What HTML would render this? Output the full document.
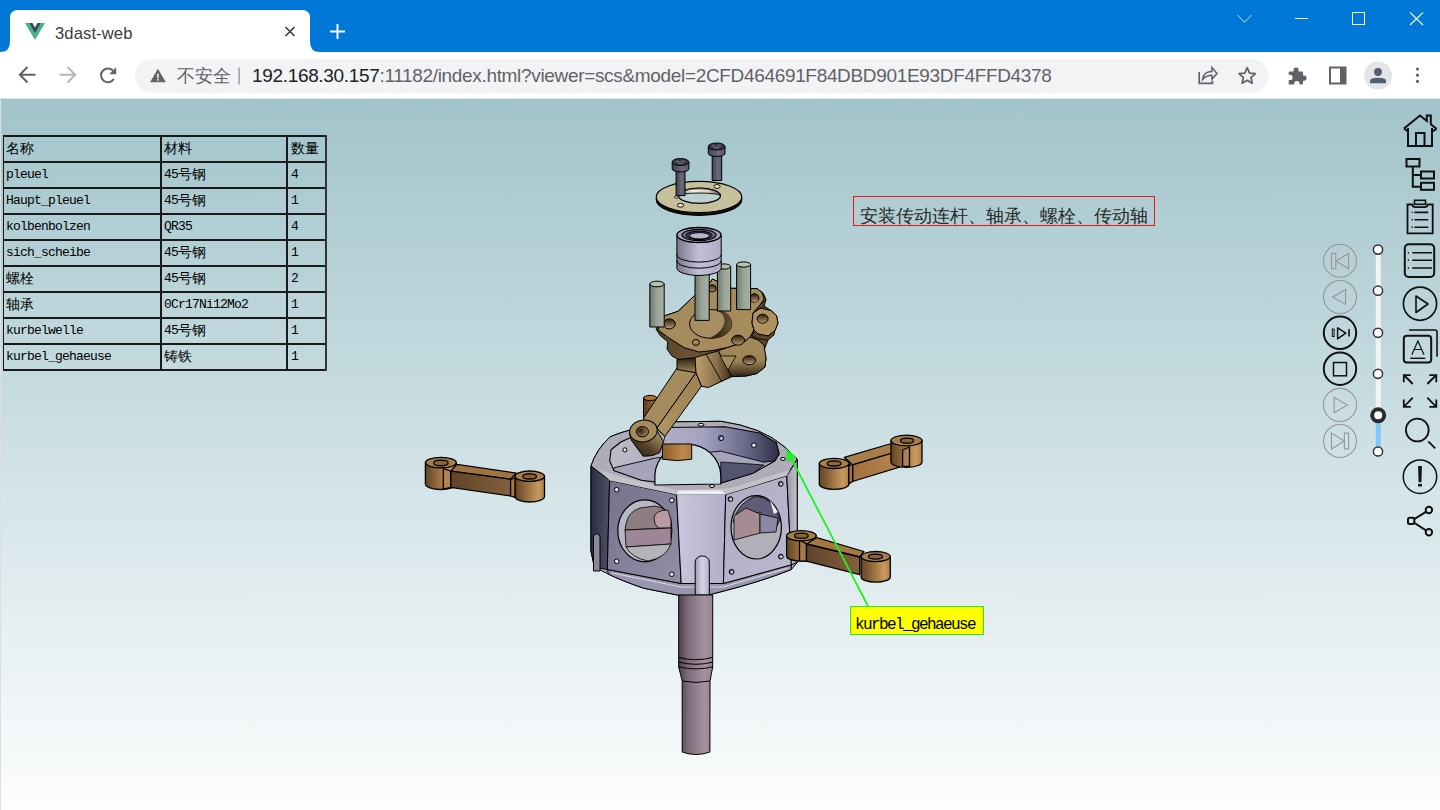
<!DOCTYPE html>
<html><head><meta charset="utf-8">
<style>
*{margin:0;padding:0;box-sizing:border-box}
html,body{width:1440px;height:810px;overflow:hidden;font-family:"Liberation Sans",sans-serif;background:#fff;position:relative}
.abs{position:absolute}
#titlebar{left:0;top:0;width:1440px;height:52px;background:#0078d7}
#toolbar{left:0;top:52px;width:1440px;height:46px;background:#fff}
#omni{left:135px;top:59px;width:1134px;height:34px;border-radius:17px;background:#f1f3f4}
#view{left:1px;top:99px;width:1439px;height:711px;background:linear-gradient(to bottom,#a1c4ca 0px,#c5dbe0 281px,#e8f0f2 541px,#fcfdfe 711px)}
.tb{position:absolute;font-family:"Liberation Mono",monospace;font-size:13px;letter-spacing:-0.8px;color:#000;white-space:nowrap}
.hl{position:absolute;background:#1a1a1a;height:2px}
.vl{position:absolute;background:#1a1a1a;width:2px}
.cj{font-size:13.6px;letter-spacing:-0.2px;position:relative;top:0.5px}
</style></head><body>
<div id="titlebar" class="abs"></div>
<!-- tab -->
<svg class="abs" style="left:0;top:0" width="360" height="53">
<path d="M0 52 Q10 52 10 42 L10 18 Q10 10 18 10 L302 10 Q310 10 310 18 L310 42 Q310 52 320 52 Z" fill="#fff"/>
<!-- vue logo -->
<path d="M25 23 L29 23 L35 33.5 L41 23 L45 23 L35 40 Z" fill="#41b883"/>
<path d="M29 23 L32.5 23 L35 27.5 L37.5 23 L41 23 L35 33.5 Z" fill="#35495e"/>
<path d="M285.5 27 L294.5 36 M294.5 27 L285.5 36" stroke="#3c3c3c" stroke-width="1.6"/>
<path d="M330 31.5 L345 31.5 M337.5 24 L337.5 39" stroke="#fff" stroke-width="2"/>
</svg>
<div class="abs" style="left:55px;top:23.5px;font-size:16.6px;letter-spacing:0.1px;color:#3c3c3c">3dast-web</div>
<!-- window controls -->
<svg class="abs" style="left:1220px;top:0" width="220" height="40">
<path d="M17.5 15 L24.5 22.3 L31.5 15" stroke="rgba(255,255,255,0.75)" stroke-width="1" fill="none"/>
<path d="M75 18.5 L88 18.5" stroke="#fff" stroke-width="1"/>
<rect x="132.5" y="12.5" width="12" height="12" stroke="#fff" stroke-width="1" fill="none"/>
<path d="M190 12.3 L203 25 M203 12.3 L190 25" stroke="#fff" stroke-width="1.1"/>
</svg>
<div id="toolbar" class="abs"></div>
<div id="omni" class="abs"></div>
<!-- nav icons -->
<svg class="abs" style="left:0;top:52px" width="140" height="46">
<path d="M35.5 22.7 L20.5 22.7 M27.5 15 L19.8 22.7 L27.5 30.5" stroke="#5f6368" stroke-width="2" fill="none"/>
<path d="M59.5 22.7 L74.5 22.7 M67.5 15 L75.2 22.7 L67.5 30.5" stroke="#b4b6b9" stroke-width="2" fill="none"/>
<path d="M113.8 27 A6.9 6.9 0 1 1 113.3 19" stroke="#5f6368" stroke-width="2" fill="none"/>
<path d="M116.2 15.3 L116.2 22.3 L109.2 22.3 Z" fill="#5f6368"/>
</svg>
<svg class="abs" style="left:140px;top:55px" width="120" height="40">
<path d="M17.9 14.8 L10.9 26.8 L24.9 26.8 Z" fill="#5f6368" stroke="#5f6368" stroke-width="1.1" stroke-linejoin="round"/>
<rect x="17.1" y="18.6" width="1.6" height="4.6" fill="#f1f3f4"/>
<rect x="17.1" y="24" width="1.6" height="1.6" fill="#f1f3f4"/>
<rect x="98.5" y="12.5" width="1.2" height="17" fill="#888"/>
</svg>
<div class="abs" style="left:177px;top:64px;font-size:18px;color:#5f6368">不安全</div>
<div class="abs" style="left:252px;top:65px;font-size:19px;letter-spacing:-0.33px;color:#202124;white-space:nowrap" id="url">192.168.30.157<span style="color:#5f6368">:11182/index.html?viewer=scs&amp;model=2CFD464691F84DBD901E93DF4FFD4378</span></div>
<!-- right toolbar icons -->
<svg class="abs" style="left:1180px;top:52px" width="260" height="46">
<!-- share -->
<path d="M19.2 19.9 L19.2 31.3 L32.5 31.3 L32.5 28.8" stroke="#5f6368" stroke-width="1.7" fill="none"/>
<path d="M22.6 27.6 Q23.5 19.6 31.9 19.6 L31.9 15.6 L37 21.4 L31.9 27.3 L31.9 23.3 Q26 23.3 22.6 27.6 Z" stroke="#5f6368" stroke-width="1.5" fill="none" stroke-linejoin="miter"/>
<!-- star -->
<path d="M67.20 15.70 L69.55 21.06 L75.38 21.64 L71.00 25.54 L72.25 31.26 L67.20 28.30 L62.15 31.26 L63.40 25.54 L59.02 21.64 L64.85 21.06 Z" stroke="#5f6368" stroke-width="1.7" fill="none" stroke-linejoin="round"/>
<!-- puzzle -->
<path d="M109.5 19.5 L113.5 19.5 L113.5 18 A2.6 2.6 0 0 1 118.7 18 L118.7 19.5 L122 19.5 Q123 19.5 123 20.5 L123 23.5 L124 23.5 A2.6 2.6 0 0 1 124 28.7 L123 28.7 L123 31.5 Q123 32.5 122 32.5 L119.5 32.5 L119.5 31.5 A2.6 2.6 0 0 0 114.3 31.5 L114.3 32.5 L109.5 32.5 Q108.7 32.5 108.7 31.5 L108.7 28 L110 28 A2.6 2.6 0 0 0 110 22.8 L108.7 22.8 L108.7 20.5 Q108.7 19.5 109.5 19.5 Z" fill="#5f6368"/>
<!-- sidebar -->
<rect x="150" y="15.5" width="15.5" height="16" fill="none" stroke="#5f6368" stroke-width="2"/>
<rect x="160" y="15.5" width="5.5" height="16" fill="#5f6368"/>
<!-- avatar -->
<circle cx="198" cy="23.6" r="14" fill="#e3e5e8"/>
<circle cx="198" cy="20" r="3.9" fill="#525e6e"/>
<path d="M190 31.3 L190 29 Q190 25.8 198 25.8 Q206 25.8 206 29 L206 31.3 Z" fill="#525e6e"/>
<!-- kebab -->
<circle cx="237.5" cy="17" r="1.6" fill="#5f6368"/>
<circle cx="237.5" cy="23.2" r="1.6" fill="#5f6368"/>
<circle cx="237.5" cy="29.4" r="1.6" fill="#5f6368"/>
</svg>
<div id="view" class="abs"></div>
<div class="abs" style="left:0;top:98px;width:1440px;height:1px;background:#e2e0e4"></div><div class="abs" style="left:0;top:98px;width:1px;height:712px;background:#dcdee0"></div>

<!-- table -->
<div class="abs" style="left:0;top:0;width:340px;height:380px">
<div class="hl" style="left:3px;top:135px;width:324px"></div>
<div class="hl" style="left:3px;top:161px;width:324px"></div>
<div class="hl" style="left:3px;top:187px;width:324px"></div>
<div class="hl" style="left:3px;top:213px;width:324px"></div>
<div class="hl" style="left:3px;top:239px;width:324px"></div>
<div class="hl" style="left:3px;top:265px;width:324px"></div>
<div class="hl" style="left:3px;top:291px;width:324px"></div>
<div class="hl" style="left:3px;top:317px;width:324px"></div>
<div class="hl" style="left:3px;top:343px;width:324px"></div>
<div class="hl" style="left:3px;top:369px;width:324px"></div>
<div class="vl" style="left:3px;top:135px;height:236px;width:1px"></div>
<div class="vl" style="left:160px;top:135px;height:236px"></div>
<div class="vl" style="left:286px;top:135px;height:236px"></div>
<div class="vl" style="left:325px;top:135px;height:236px;background:#333"></div>
</div>

<!-- MODEL -->
<svg class="abs" style="left:0;top:0" width="1440" height="810" viewBox="0 0 1440 810">
<defs>
<linearGradient id="cylTan" x1="0" x2="1" y1="0" y2="0">
<stop offset="0" stop-color="#604426"/><stop offset="0.45" stop-color="#9c7242"/><stop offset="0.8" stop-color="#c89a5e"/><stop offset="1" stop-color="#aa7e4c"/>
</linearGradient>
<linearGradient id="rodFront" x1="0" x2="1" y1="0" y2="0">
<stop offset="0" stop-color="#60432a"/><stop offset="1" stop-color="#84603a"/>
</linearGradient>
<linearGradient id="rodFrontR" x1="0" x2="1" y1="0" y2="0">
<stop offset="0" stop-color="#a07040"/><stop offset="1" stop-color="#b88650"/>
</linearGradient>
<linearGradient id="shaftG" x1="0" x2="1" y1="0" y2="0">
<stop offset="0" stop-color="#4e404c"/><stop offset="0.3" stop-color="#806e7e"/><stop offset="0.75" stop-color="#a4929e"/><stop offset="1" stop-color="#96848f"/>
</linearGradient>
<linearGradient id="pinG" x1="0" x2="1" y1="0" y2="0">
<stop offset="0" stop-color="#6e786c"/><stop offset="0.5" stop-color="#9aa496"/><stop offset="1" stop-color="#a8b0a2"/>
</linearGradient>
<linearGradient id="screwG" x1="0" x2="1" y1="0" y2="0">
<stop offset="0" stop-color="#404050"/><stop offset="0.6" stop-color="#6a6a7a"/><stop offset="1" stop-color="#5a5a68"/>
</linearGradient>
<linearGradient id="bearG" x1="0" x2="1" y1="0" y2="0">
<stop offset="0" stop-color="#7a7690"/><stop offset="0.5" stop-color="#c4c0d8"/><stop offset="1" stop-color="#b0acc4"/>
</linearGradient>
<linearGradient id="housL" x1="0" x2="1" y1="0" y2="0">
<stop offset="0" stop-color="#2c2c40"/><stop offset="1" stop-color="#50506a"/>
</linearGradient>
<linearGradient id="panelL" x1="0" x2="1" y1="0" y2="1">
<stop offset="0" stop-color="#74728c"/><stop offset="1" stop-color="#9290a6"/>
</linearGradient>
<linearGradient id="innerWall" x1="0" x2="1" y1="0" y2="0">
<stop offset="0" stop-color="#bcbcc2"/><stop offset="0.25" stop-color="#b4b2c6"/><stop offset="0.55" stop-color="#a4a2c0"/><stop offset="0.8" stop-color="#6c6a8c"/><stop offset="1" stop-color="#2e2e46"/>
</linearGradient>
<linearGradient id="centerF" x1="0" x2="1" y1="0" y2="0">
<stop offset="0" stop-color="#c8c6dc"/><stop offset="1" stop-color="#b2b0c8"/>
</linearGradient>
<linearGradient id="panelR" x1="0" x2="1" y1="0" y2="1">
<stop offset="0" stop-color="#aeacc2"/><stop offset="1" stop-color="#bcbad0"/>
</linearGradient>
<linearGradient id="sideR" x1="0" x2="1" y1="0" y2="0">
<stop offset="0" stop-color="#9896a8"/><stop offset="1" stop-color="#c4c2cc"/>
</linearGradient>
<linearGradient id="innerTan" x1="0" x2="1" y1="0" y2="0">
<stop offset="0" stop-color="#8a5a2c"/><stop offset="0.7" stop-color="#c08a4c"/><stop offset="1" stop-color="#b07a40"/>
</linearGradient>
<linearGradient id="pinW" x1="0" x2="1" y1="0" y2="0">
<stop offset="0" stop-color="#9c9cb4"/><stop offset="0.5" stop-color="#d4d4e4"/><stop offset="1" stop-color="#b4b4c8"/>
</linearGradient>
<linearGradient id="flDark" x1="0" x2="1" y1="0" y2="1">
<stop offset="0" stop-color="#3e2e1a"/><stop offset="0.5" stop-color="#6a5234"/><stop offset="1" stop-color="#4a3820"/>
</linearGradient>
<linearGradient id="rodSide" x1="0" x2="1" y1="0" y2="0">
<stop offset="0" stop-color="#b09462"/><stop offset="1" stop-color="#9c8254"/>
</linearGradient>
<linearGradient id="smallEnd" x1="0" x2="1" y1="1" y2="0">
<stop offset="0" stop-color="#1e180c"/><stop offset="0.45" stop-color="#54422a"/><stop offset="0.8" stop-color="#98805a"/><stop offset="1" stop-color="#a68c5c"/>
</linearGradient>
<radialGradient id="holeG" cx="0.35" cy="0.4" r="0.7">
<stop offset="0" stop-color="#2a2010"/><stop offset="1" stop-color="#a88c5c"/>
</radialGradient>
<linearGradient id="neckG" x1="0" x2="0" y1="0" y2="1">
<stop offset="0" stop-color="#2a2010"/><stop offset="1" stop-color="#a08658"/>
</linearGradient>
<linearGradient id="neckSide" x1="0" x2="1" y1="0" y2="0">
<stop offset="0" stop-color="#c0a070"/><stop offset="0.6" stop-color="#8a7048"/><stop offset="1" stop-color="#3a2a18"/>
</linearGradient>
<linearGradient id="lobeG" x1="0" x2="0" y1="0" y2="1">
<stop offset="0" stop-color="#a48a5a"/><stop offset="0.6" stop-color="#9e8456"/><stop offset="0.8" stop-color="#6a5434"/><stop offset="1" stop-color="#2e2214"/>
</linearGradient>
<linearGradient id="crescG" x1="0" x2="1" y1="0" y2="0">
<stop offset="0" stop-color="#1e160c"/><stop offset="1" stop-color="#6a5434"/>
</linearGradient>
<linearGradient id="holeT" x1="0" x2="0" y1="0" y2="1">
<stop offset="0" stop-color="#2a1e10"/><stop offset="0.7" stop-color="#907650"/><stop offset="1" stop-color="#ac9262"/>
</linearGradient>
<linearGradient id="washIn" x1="0" x2="1" y1="0" y2="0">
<stop offset="0" stop-color="#8a8670"/><stop offset="0.35" stop-color="#f4f0dc"/><stop offset="0.7" stop-color="#d8d4bc"/><stop offset="1" stop-color="#5a5848"/>
</linearGradient>
<linearGradient id="behindCyl" x1="0" x2="1" y1="0" y2="0">
<stop offset="0" stop-color="#5a3a1a"/><stop offset="1" stop-color="#a87040"/>
</linearGradient>
<radialGradient id="boltD" cx="0.65" cy="0.6" r="0.6">
<stop offset="0" stop-color="#f0f0f8"/><stop offset="1" stop-color="#4a4a60"/>
</radialGradient>
</defs>
<g stroke="#000" stroke-width="1" stroke-linejoin="round">

<!-- ===== left pleuel ===== -->
<g id="pl-left" stroke-width="1.3">
<path d="M425.4 462.6 L425.4 484 A15.4 5.5 0 0 0 456.3 484 L456.3 462.6 Z" fill="url(#cylTan)"/>
<ellipse cx="440.9" cy="462.6" rx="15.4" ry="5.3" fill="#a87e48"/>
<ellipse cx="440.9" cy="463" rx="7.2" ry="2.8" fill="#8a6236"/>
<path d="M456.9 464.4 L516.2 473.1 L510.6 479.3 L450.7 471.2 Z" fill="#a07440"/>
<path d="M450.7 471.2 L510.6 479.3 L510.6 495.9 L450.7 487.3 Z" fill="url(#rodFront)"/>
<path d="M443.3 468.5 L450.7 471.2 L450.7 487.3 L443.3 489.2 Z" fill="#b4824c"/>
<path d="M514.9 476.2 L514.9 496.5 A14.8 5.5 0 0 0 544.5 496.5 L544.5 476.2 Z" fill="url(#cylTan)"/>
<path d="M510.6 479.3 L515 478 L515 497.5 L510.6 495.9 Z" fill="#a87848"/>
<ellipse cx="529.7" cy="476.2" rx="14.8" ry="5.2" fill="#a87e48"/>
<ellipse cx="529.7" cy="476.4" rx="6.8" ry="2.6" fill="#8a6236"/>
</g>

<!-- ===== right top pleuel ===== -->
<g id="pl-rt" stroke-width="1.3">
<path d="M844.3 457.4 L889.6 444 L902.6 450 L852.6 464.8 Z" fill="#a87e48"/>
<path d="M852.6 464.8 L902.6 450 L902.6 466.2 L852.6 481.5 Z" fill="url(#rodFrontR)"/>
<path d="M891 440.5 L891 462 A15.5 5.3 0 0 0 922 462 L922 440.5 Z" fill="url(#cylTan)"/>
<path d="M902.6 450 L909.5 447 L909.5 466.5 L902.6 466.2 Z" fill="#b08050"/>
<ellipse cx="906.5" cy="440.5" rx="15.5" ry="5.3" fill="#a87e48"/>
<ellipse cx="907" cy="440.7" rx="6.5" ry="2.5" fill="#8c6436"/>
<path d="M819.3 463.4 L819.3 484.3 A14.8 5.1 0 0 0 848.9 484.3 L848.9 463.4 Z" fill="url(#cylTan)"/>
<path d="M848.9 465 L852.6 464.8 L852.6 481.5 L848.9 484 Z" fill="#a87a48"/>
<ellipse cx="834.1" cy="463.4" rx="14.8" ry="5.1" fill="#a87e48"/>
<ellipse cx="834.1" cy="463.4" rx="6.9" ry="2.6" fill="#8c6436"/>
</g>

<!-- small tan cylinder behind rod -->
<path d="M643.5 398 L657 398 L657 418 L648.5 421 L643.5 418 Z" fill="url(#behindCyl)"/><ellipse cx="650.2" cy="398" rx="6.7" ry="2.6" fill="#a87238"/>

<!-- ===== housing ===== -->
<g id="housing">
<!-- outer silhouette -->
<path d="M591 466 Q596 450 609.7 437.2 Q627 428.5 673.6 421.9 L720.8 421.3 Q762 427 784.7 447 L797.2 459 L797.2 562.4 L791.4 569.5 Q760 582 720 592 L707 595.3 L678.8 595.3 L643.6 588.2 Q620 580 608.5 574.2 L594.4 567.1 L590.9 550.7 Z" fill="#a8a6ba"/>
<!-- left dark face -->
<path d="M591 466 L609.6 480.4 L607.3 569.5 L594.4 567.1 L590.9 550.7 Z" fill="url(#housL)"/>
<!-- bottom bevel band -->
<path d="M607.3 569.5 L681.2 583.5 L723.4 583.5 L791.4 564.8 L791.4 569.5 Q760 582 720 592 L707 595.3 L678.8 595.3 L643.6 588.2 Q620 580 608.5 574.2 Z" fill="#9896ae"/>
<path d="M612 573 L681 587 L723 587 L788 568" fill="none" stroke="#d8d6e6" stroke-width="1.2"/>
<!-- left panel -->
<path d="M609.6 480.4 L676.5 494.4 L681.2 583.5 L607.3 569.5 Z" fill="url(#panelL)"/>
<!-- center face -->
<path d="M676.5 494.4 L725.7 494.4 L723.4 583.5 L681.2 583.5 Z" fill="url(#centerF)"/>
<!-- right panel -->
<path d="M725.7 494.4 L786.7 475.7 L791.4 564.8 L723.4 583.5 Z" fill="url(#panelR)"/>
<!-- right side face -->
<path d="M786.7 475.7 L797.2 459.2 L797.2 562.4 L791.4 564.8 Z" fill="url(#sideR)"/>
<!-- top rim surface -->
<path d="M591 466 Q596 450 609.7 437.2 Q627 428.5 673.6 421.9 L720.8 421.3 Q762 427 784.7 447 L797.2 459 L786.7 475.7 L725.7 494.4 L676.5 494.4 L609.6 480.4 Z" fill="#aeacb6"/>
<path d="M600 470 L609.6 480.4 L676.5 494.4 L725.7 494.4 L786.7 475.7 L790 470 L729 488.6 L676.4 490 L618 476 Z" fill="#c4c2c8" stroke="none"/>
<!-- inner opening -->
<path d="M609.7 460.8 L611 449.7 L620.8 442 L634.7 435.8 L665.3 427.5 L725 426.8 L759.7 433 L776.4 442.8 L779.2 453.9 L775 460.8 L752.8 473.3 L720.8 483 L676.4 484.4 L641.7 480.3 L613.9 470.6 Z" fill="url(#innerWall)" stroke-width="1.1"/>
<!-- lower floor band -->
<path d="M613.9 467.8 L655.6 458 L720.8 451.1 L763.9 462.2 L775 460.8 L752.8 473.3 L720.8 483 L676.4 484.4 L641.7 480.3 L613.9 470.6 Z" fill="#a6a4ba" stroke-width="0.9"/>
<path d="M720.8 462 L764 465 L752.8 473.3 L720.8 483 Z" fill="#55546e" stroke-width="0.8"/>
<!-- background hole -->
<path d="M654.9 485 L654.9 475 A33 32.5 0 0 1 720.8 475 L720.8 484 Z" fill="#c8dce1" stroke-width="1.2"/>
<!-- inner tan cylinder -->
<path d="M662.4 444 L691.7 444 L691.7 459.2 Q677 462 662.4 459.2 Z" fill="url(#innerTan)"/>
<path d="M676.5 494.4 L725.7 494.4 L722 490.5 L679 490.5 Z" fill="#eeeef6" stroke="none"/>
<!-- left panel window -->
<ellipse cx="644.8" cy="530.8" rx="27" ry="31" fill="#b8b8c4" stroke-width="1.2"/>
<path d="M626 524 Q628 512 640 508 L655 506 Q668 508 671 520 L671 528 L625 530 Z" fill="#8e7e84" stroke-width="0.8"/>
<path d="M654 518 Q655 510 668 510 L671 520 L671 528 L658 528 Q654 524 654 518 Z" fill="#b89aa2" stroke-width="0.8"/>
<path d="M625 530 L671 528 L671 544 L626 547 Z" fill="#9c8698" stroke-width="0.8"/>
<path d="M626 547 L671 544 Q666 558 648 561 Q632 558 626 547 Z" fill="#b4b4b8" stroke-width="0.8"/>
<!-- right panel window -->
<ellipse cx="756.2" cy="527.3" rx="25.2" ry="31.7" fill="#b0b0b8" stroke-width="1.2"/>
<path d="M733 522 Q738 502 756 496 Q774 498 780 520 L776 528 L760 512 L740 520 Z" fill="#5e5c78" stroke-width="0.8"/>
<path d="M734 516 L746 508 L760 514 L760 533 L734 540 Z" fill="#a78a92" stroke-width="0.8"/>
<path d="M760 514 L778 518 L776 532 L760 533 Z" fill="#8a88a4" stroke-width="0.8"/>
<path d="M770 500 L778 512 L774 514 Z" fill="#f0f0f8" stroke="none"/>
<!-- bolt holes -->
<g fill="#e4e4ec" stroke-width="1">
<circle cx="616.7" cy="489.7" r="2.3"/><circle cx="671.8" cy="500.3" r="2.3"/>
<circle cx="616.7" cy="561.3" r="2.3"/><circle cx="671.8" cy="574.2" r="2.3"/>
<circle cx="730.4" cy="499.1" r="2.4" fill="url(#boltD)"/><circle cx="780.8" cy="483.9" r="2.4" fill="url(#boltD)"/>
<circle cx="780.8" cy="556.6" r="2.4" fill="url(#boltD)"/><circle cx="731.6" cy="571.8" r="2.4" fill="url(#boltD)"/>
<circle cx="721" cy="438.1" r="2.5" fill="url(#boltD)"/><circle cx="753.9" cy="445.2" r="2.3"/>
<circle cx="624.9" cy="449.9" r="2.1"/>
<ellipse cx="712" cy="486" rx="2.5" ry="1.5"/>
<ellipse cx="701" cy="424.8" rx="3" ry="1.4"/>
<ellipse cx="783" cy="459" rx="2.5" ry="1.5"/>
</g>
<!-- front pin -->
<path d="M695.2 595 L695.2 562 A7 6 0 0 1 709.3 562 L709.3 595 Z" fill="url(#pinW)"/>
<path d="M593.5 571 L593.5 537 A3 3 0 0 1 600 537 L600 571 Z" fill="#8a889e"/>
</g>

<!-- ===== shaft ===== -->
<g id="shaft">
<path d="M678.7 595 L712.7 595 L712.7 667 L710 681 L709.9 752 Q696 757 682.2 752 L682.2 681 L678.7 667 Z" fill="url(#shaftG)"/>
<path d="M678.7 657.4 Q696 662 712.7 657.4 M678.7 662.1 Q696 666.5 712.7 662.1 M678.7 666.8 Q696 671 712.7 666.8 M682.2 681 Q696 684 710 681" fill="none"/>
</g>

<!-- ===== main rod (Haupt_pleuel) ===== -->
<g id="hauptpleuel">
<!-- silhouette base (dark undersides) -->
<path d="M656 329 L664.8 315.7 L678.1 311.3 L694.4 295.7 L709.3 283.9 L712.5 279 L731 288.3 L757 288.6 L763 293 L766 299.4 L764 306 L771 310.6 L776.5 315.5 L778 323 L775 330.5 L768 340 L764 350 L766 358 L765 367 L757 373.5 L746 376 L733 376 L721 378 L710 383 L701.5 386.2 L677 371 L679.6 360 L672 356 L667 349 L667.8 341.7 L660.4 335.7 Z" fill="url(#flDark)"/>
<!-- rod body: top face & side -->
<path d="M677 368 L696 372.7 L656.7 428.3 L643.1 418.8 Z" fill="#a68c5c"/>
<path d="M696 372.7 L701.5 386.2 L664.8 436.5 L656.7 428.3 Z" fill="url(#rodSide)"/>
<!-- neck -->
<path d="M677 359.5 L696 357.7 L696 372.7 L677 369.5 Z" fill="url(#neckG)"/>
<path d="M695 357.5 L718.3 350.8 L731.7 376.7 L708.3 387.5 L701.5 386.2 L696 372.7 Z" fill="url(#neckSide)"/>
<path d="M706 354 L722 382" fill="none" stroke-width="0.9"/>
<path d="M718.3 350.8 L727 347.6 L744 342 L750 337 L758 340 L764 345 L766 358 L765 367 L757 373.5 L746 376 L731.7 376.7 Z" fill="url(#lobeG)"/>
<path d="M720 356 L736 356 L728 370 Z" fill="#a68c5c" stroke-width="0.8"/>
<!-- flange top plate -->
<path d="M658 329.8 L664.8 315.7 L678.1 311.3 L694.4 295.7 L709.3 283.9 L712.5 279 L731 288.3 L752 288.5 L757 288.6 L762 292.5 L764 299 L760 305 L753 313 L752 323 L754 330 L750 337 L744 342 L727 347.6 L712 350.6 L699 352 L684 347.6 L667.8 337.2 Z" fill="#a68c5c"/>
<!-- middle right lobe -->
<path d="M753 313 L760 308 L771 310.6 L776.5 315.5 L778 323 L775 330.5 L768 336 L758 334 L754 330 L752 323 Z" fill="#b0925e"/>
<path d="M754 330 L758 334 L768 336 L775 330.5 L774 335 L768 340 L758 339 L752 336 Z" fill="#5a4428" stroke-width="0.8"/>
<path d="M760 305 L766 300 M753 313 L764 306" fill="none" stroke-width="0.8"/>
<!-- boss recess -->
<ellipse cx="710.7" cy="323.9" rx="21.1" ry="14.4" fill="#a88e60"/>
<path d="M714 309.6 Q733 311 731.8 325 Q730 337 710 338.3 Q724 331 724.5 321 Q724 312 714 309.6 Z" fill="url(#crescG)" stroke="none"/>
<!-- holes -->
<g stroke-width="1">
<ellipse cx="669.3" cy="323.9" rx="6" ry="5" fill="url(#holeT)"/>
<path d="M665 326.5 Q669 329.5 673.8 325.5 Q670 328.8 665 326.5 Z" fill="#f4f4f4" stroke="none"/>
<ellipse cx="738.1" cy="340.2" rx="6.5" ry="5" fill="url(#holeT)"/>
<ellipse cx="754.4" cy="298" rx="4.5" ry="4.2" fill="url(#holeT)"/>
<path d="M751 301 Q755 302.8 758.2 299.5 Q755 303.8 751 301 Z" fill="#f4f4f4" stroke="none"/>
<ellipse cx="762.6" cy="318.7" rx="5.5" ry="4.5" fill="url(#holeT)"/>
<path d="M758.5 321 Q763 323.8 767.5 320 Q763 324.3 758.5 321 Z" fill="#f4f4f4" stroke="none"/>
<ellipse cx="749.3" cy="360.2" rx="6.5" ry="4.5" fill="url(#holeT)"/>
<path d="M745 362.5 Q750 365 754.5 361.5 Q750 365.5 745 362.5 Z" fill="#f4f4f4" stroke="none"/>
<ellipse cx="695.9" cy="342.4" rx="3.5" ry="3" fill="#a08658"/>
<ellipse cx="712.2" cy="288.3" rx="4" ry="3.5" fill="url(#holeT)"/>
</g>
<!-- small end -->
<path d="M629.5 431 Q630 440 633.6 443.3 L643.1 456.2 Q652 457 659.4 452.8 L663.5 441.9 L657.3 431 Z" fill="url(#smallEnd)"/>
<ellipse cx="643.4" cy="431" rx="13.9" ry="10.9" fill="#a68c5c" transform="rotate(-10 643.4 431)"/>
<ellipse cx="642.4" cy="431.7" rx="6.1" ry="5.2" fill="url(#holeG)"/>
<path d="M656.7 428.3 L664.8 436.5 L663.5 441.9" fill="none" stroke-width="0.8"/>
</g>

<!-- ===== bottom right pleuel ===== -->
<g id="pl-rb" stroke-width="1.3">
<path d="M786.6 535.7 L786.6 556 A14.8 5.2 0 0 0 816.2 556 L816.2 535.7 Z" fill="url(#cylTan)"/>
<path d="M799.5 540 L806.5 544 L806.5 561.2 L799.5 561 Z" fill="#a87848"/>
<ellipse cx="801.4" cy="535.7" rx="14.8" ry="5.1" fill="#a87e48"/>
<ellipse cx="801.4" cy="535.7" rx="6.8" ry="2.6" fill="#8c6436"/>
<path d="M816.7 537.6 L863.9 551.5 L859.7 557 L806.5 544 Z" fill="#a57840"/>
<path d="M806.5 544 L859.7 557 L859.7 574.6 L806.5 561.2 Z" fill="url(#rodFront)"/>
<path d="M861.1 556.6 L861.1 577 A14.6 5.2 0 0 0 890.3 577 L890.3 556.6 Z" fill="url(#cylTan)"/>
<ellipse cx="875.7" cy="556.6" rx="14.6" ry="5.1" fill="#a87e48"/>
<ellipse cx="875.5" cy="556.6" rx="7" ry="2.5" fill="#8c6436"/>
</g>

<!-- ===== pins ===== -->
<g id="pins">
<path d="M649.8 284 L649.8 327 L664.2 327 L664.2 284 Z" fill="url(#pinG)"/>
<ellipse cx="657" cy="284" rx="7.2" ry="2.8" fill="#b8c0b0"/>
<path d="M695 274 L695 320.4 L709.2 320.4 L709.2 274 Z" fill="url(#pinG)"/>
<path d="M717.4 266.5 L717.4 311 L730.7 311 L730.7 266.5 Z" fill="url(#pinG)"/>
<ellipse cx="724" cy="266.5" rx="6.6" ry="2.6" fill="#b8c0b0"/>
<path d="M736.6 264.5 L736.6 309.6 L750.6 309.6 L750.6 264.5 Z" fill="url(#pinG)"/>
<ellipse cx="743.6" cy="264.5" rx="7" ry="2.6" fill="#b8c0b0"/>
</g>

<!-- ===== bearing ===== -->
<g id="bearing">
<path d="M676.9 235 L676.9 268 A22.1 7.5 0 0 0 721.2 268 L721.2 235 Z" fill="url(#bearG)"/>
<path d="M676.9 254.6 A22.1 7.5 0 0 0 721.2 254.6 M676.9 260.7 A22.1 7.5 0 0 0 721.2 260.7" fill="none"/>
<ellipse cx="699" cy="235" rx="22.1" ry="7.5" fill="#a4a0b8" stroke-width="1.3"/>
<ellipse cx="699" cy="235" rx="17" ry="5.6" fill="#6c6882" stroke-width="1.2"/>
<ellipse cx="699" cy="235.3" rx="13" ry="4.2" fill="#3e3c4c" stroke-width="1"/>
<ellipse cx="699.5" cy="235.8" rx="10" ry="3.2" fill="#b8b4cc" stroke-width="1"/>
</g>

<!-- ===== washer ===== -->
<g id="washer">
<ellipse cx="699" cy="199.5" rx="42.8" ry="15.8" fill="#14120a" stroke="#000" stroke-width="1.2"/>
<ellipse cx="699" cy="197" rx="42.8" ry="15.6" fill="#c6c09c" stroke-width="1.2"/>
<ellipse cx="699.5" cy="195.8" rx="21" ry="7.6" fill="#bccfd2" stroke-width="1.2"/>
<path d="M678.5 195.8 A21 7.6 0 0 1 720.5 195.8 A21 2.8 0 0 0 678.5 195.8 Z" fill="url(#washIn)" stroke-width="0.9"/>
<path d="M681 192.5 A19 5 0 0 1 716 191.5" fill="none" stroke="#3a3828" stroke-width="0.7"/>
<ellipse cx="680.5" cy="205.3" rx="3.2" ry="1.9" fill="#e8e4cc" stroke-width="0.9"/>
<ellipse cx="717" cy="186.5" rx="3.2" ry="1.9" fill="#e8e4cc" stroke-width="0.9"/>
<ellipse cx="676.5" cy="197" rx="2" ry="1.3" fill="#e8e4cc" stroke-width="0.8"/>
</g>

<!-- ===== screws ===== -->
<g id="screws">
<rect x="676.1" y="171" width="8.9" height="24.6" fill="url(#screwG)"/>
<path d="M672.2 162 L672.2 169 A8.35 3 0 0 0 688.9 169 L688.9 162 Z" fill="url(#screwG)"/>
<ellipse cx="680.5" cy="162" rx="8.35" ry="3.5" fill="#3a3a46"/><path d="M676 161.5 L679 161.5 M681.5 161.2 L684.5 161.2 M678 163.2 L683 163.2" stroke="#8a8a98" stroke-width="0.8"/>
<rect x="712.2" y="155.5" width="9.5" height="25" fill="url(#screwG)"/>
<path d="M708.3 146.5 L708.3 153.5 A8.35 3 0 0 0 725 153.5 L725 146.5 Z" fill="url(#screwG)"/>
<ellipse cx="716.6" cy="146.5" rx="8.35" ry="3.5" fill="#3a3a46"/><path d="M712 146 L715 146 M717.5 145.7 L720.5 145.7 M714 147.7 L719 147.7" stroke="#8a8a98" stroke-width="0.8"/>
</g>
</g>

<!-- green leader -->
<path d="M868 606 L790.5 457" stroke="#22f022" stroke-width="1.8"/>
<path d="M785.9 448.5 L787.4 461.9 L796.7 457.4 Z" fill="#22f022"/>
</svg>

<!-- /MODEL -->
<!-- right panel icons -->
<svg class="abs" style="left:1300px;top:100px" width="140" height="450" fill="none" stroke="#111" stroke-width="2">
<g transform="translate(-1300,-100)">
<!-- house -->
<path d="M1404 128.5 L1420 115.5 L1426.8 121 L1426.8 115.5 L1430.8 115.5 L1430.8 124.3 L1436.5 128.8" stroke-linejoin="miter"/>
<path d="M1404 128.5 L1407.3 131 M1436.5 128.8 L1432.3 131.5"/>
<path d="M1408 128 L1408 146 L1432 146 L1432 128"/>
<path d="M1416 146 L1416 133 L1424.5 133 L1424.5 146"/>
<!-- tree -->
<rect x="1406.5" y="159" width="13" height="7.5"/>
<rect x="1421" y="171.5" width="13" height="7"/>
<rect x="1421" y="182.8" width="13" height="7"/>
<path d="M1412.8 166.5 L1412.8 186.7 L1421 186.7 M1412.8 175 L1421 175"/>
<!-- clipboard -->
<path d="M1412.5 204.5 L1407.5 204.5 L1407.5 233.3 L1432.7 233.3 L1432.7 204.5 L1427.5 204.5 Q1427.5 207.2 1424.5 207.2 L1415.5 207.2 Q1412.5 207.2 1412.5 204.5 Z" stroke-width="1.8"/>
<rect x="1414.5" y="200.3" width="11" height="4" stroke-width="1.6"/>
<path d="M1414.4 212.4 L1428.3 212.4 M1414.4 219.7 L1428.3 219.7 M1414.4 227.2 L1428.3 227.2" stroke-width="1.6"/>
<path d="M1411.6 212.4 L1412.8 212.4 M1411.6 219.7 L1412.8 219.7 M1411.6 227.2 L1412.8 227.2" stroke-width="1.4"/>
<!-- list -->
<rect x="1404.8" y="244.3" width="29.4" height="32.6" rx="4"/>
<path d="M1412.2 252.8 L1432 252.8 M1412.2 260.3 L1432 260.3 M1412.2 268 L1432 268" stroke-width="1.6"/>
<path d="M1407.8 252.8 L1409 252.8 M1407.8 260.3 L1409 260.3 M1407.8 268 L1409 268" stroke-width="1.4"/>
<!-- play circle -->
<circle cx="1420" cy="303.7" r="16.6" stroke-width="1.7"/>
<path d="M1416 296 L1428 304 L1416 312.5 Z" stroke-width="1.6" stroke-linejoin="round"/>
<!-- A icon -->
<path d="M1409 330 L1435 330 Q1437 330 1437 332 L1437 356.7" stroke-width="1.6"/>
<rect x="1403.8" y="335.8" width="27.4" height="26.8" rx="3" stroke-width="2"/>
<path d="M1411.8 354.7 L1417.9 341 L1424 354.7 M1414 349.5 L1421.8 349.5" stroke-width="1.2"/>
<path d="M1410.2 358.3 L1425.3 358.3" stroke-width="1.4"/>
<!-- expand -->
<path d="M1412.8 384 L1403.8 375 M1403.8 382.2 L1403.8 375.2 L1410.8 375.2" stroke-width="1.8"/>
<path d="M1427.3 384 L1436.3 375 M1436.3 382.2 L1436.3 375.2 L1429.3 375.2" stroke-width="1.8"/>
<path d="M1412.8 397.6 L1403.8 406.8 M1403.8 399.6 L1403.8 406.8 L1410.8 406.8" stroke-width="1.8"/>
<path d="M1427.3 397.6 L1436.3 406.8 M1436.3 399.6 L1436.3 406.8 L1429.3 406.8" stroke-width="1.8"/>
<!-- magnifier -->
<circle cx="1417.3" cy="430" r="11.4" stroke-width="1.8"/>
<path d="M1428.2 441.3 L1435.3 448.4" stroke-width="1.8"/>
<!-- exclamation -->
<circle cx="1420" cy="476.7" r="16.7" stroke-width="1.5"/>
<path d="M1418.1 466.1 L1421.9 466.1 L1421.4 482.2 L1418.6 482.2 Z" fill="#111" stroke="none"/>
<rect x="1418.1" y="483.9" width="3.8" height="2.6" fill="#111" stroke="none"/>
<!-- share -->
<path d="M1413.8 519.3 L1426.3 511.6 M1413.8 522.5 L1426.3 530.6" stroke-width="2"/>
<circle cx="1428.9" cy="510" r="3.2" stroke-width="2"/>
<rect x="1408" y="517.8" width="6.3" height="6.3" rx="1.5" stroke-width="2"/>
<circle cx="1428.9" cy="532.2" r="3.2" stroke-width="2"/>

<!-- slider -->
<rect x="1375.8" y="250" width="5" height="166" fill="#f4f2f2" stroke="none"/>
<rect x="1375.8" y="416" width="5" height="36" fill="#80c8f8" stroke="none"/>
<g fill="#fff" stroke="#333" stroke-width="1.5">
<circle cx="1378" cy="249.6" r="4.6"/>
<circle cx="1378" cy="290.7" r="4.6"/>
<circle cx="1378" cy="332.8" r="4.6"/>
<circle cx="1378" cy="373.8" r="4.6"/>
<circle cx="1378" cy="451.5" r="4.6"/>
</g>
<circle cx="1378.2" cy="415.3" r="6" fill="#fff" stroke="#2b2b2b" stroke-width="4"/>

<!-- playback -->
<g stroke="#9a9494" stroke-width="1.1">
<circle cx="1340" cy="260.8" r="16.5"/>
<rect x="1331.5" y="253.5" width="4.3" height="15.2"/>
<path d="M1335.8 261 L1348.6 253.5 L1348.6 268.7 Z"/>
<circle cx="1340" cy="297" r="16.5"/>
<path d="M1332.6 297 L1345.6 289.5 L1345.6 304.4 Z"/>
<circle cx="1340" cy="404.9" r="16.5"/>
<path d="M1334.2 397.5 L1347.4 404.9 L1334.2 412.8 Z"/>
<circle cx="1340" cy="441" r="16.5"/>
<path d="M1331.4 433.1 L1344.4 441 L1331.4 448.9 Z"/>
<rect x="1344.4" y="433.1" width="4.2" height="15.8"/>
</g>
<g stroke="#111">
<circle cx="1340" cy="332.8" r="16.2" stroke-width="2"/>
<rect x="1332.3" y="329.1" width="1.8" height="7.4" stroke-width="1"/>
<path d="M1337.6 327.8 L1345.8 333.2 L1337.6 338.8 Z" stroke-width="1.5" stroke-linejoin="round"/>
<rect x="1348.2" y="329.1" width="1.6" height="7.4" fill="#111" stroke="none"/>
<circle cx="1340" cy="368.7" r="16.2" stroke-width="2"/>
<rect x="1333.5" y="362.5" width="13" height="13.3" stroke-width="1.5"/>
</g>
</g>
</svg>

<!-- annotation red -->
<div class="abs" style="left:853px;top:196px;width:302px;height:30px;border:1.6px solid #f41414"></div>
<div class="abs" style="left:860px;top:204px;font-size:18px;color:#2a2a2a;white-space:nowrap;letter-spacing:0px" id="redtxt">安装传动连杆、轴承、螺栓、传动轴</div>
<!-- label yellow -->
<div class="abs" style="left:850px;top:606px;width:134px;height:29px;border:1.8px solid #22f022;background:#ffff00"></div>
<div class="abs" style="left:855px;top:616px;font-family:'Liberation Mono',monospace;font-size:16px;letter-spacing:-1.6px;color:#000;white-space:nowrap" id="ylwtxt">kurbel_gehaeuse</div>

<div id="tbl-text">
<div class="tb" style="left:6px;top:138px;height:24px;line-height:22px"><span class="cj">名称</span></div>
<div class="tb" style="left:164px;top:138px;height:24px;line-height:22px"><span class="cj">材料</span></div>
<div class="tb" style="left:291px;top:138px;height:24px;line-height:22px"><span class="cj">数量</span></div>
<div class="tb" style="left:6px;top:164px;height:24px;line-height:22px">pleuel</div>
<div class="tb" style="left:164px;top:164px;height:24px;line-height:22px">45<span class="cj">号钢</span></div>
<div class="tb" style="left:291px;top:164px;height:24px;line-height:22px">4</div>
<div class="tb" style="left:6px;top:190px;height:24px;line-height:22px">Haupt_pleuel</div>
<div class="tb" style="left:164px;top:190px;height:24px;line-height:22px">45<span class="cj">号钢</span></div>
<div class="tb" style="left:291px;top:190px;height:24px;line-height:22px">1</div>
<div class="tb" style="left:6px;top:216px;height:24px;line-height:22px">kolbenbolzen</div>
<div class="tb" style="left:164px;top:216px;height:24px;line-height:22px">QR35</div>
<div class="tb" style="left:291px;top:216px;height:24px;line-height:22px">4</div>
<div class="tb" style="left:6px;top:242px;height:24px;line-height:22px">sich_scheibe</div>
<div class="tb" style="left:164px;top:242px;height:24px;line-height:22px">45<span class="cj">号钢</span></div>
<div class="tb" style="left:291px;top:242px;height:24px;line-height:22px">1</div>
<div class="tb" style="left:6px;top:268px;height:24px;line-height:22px"><span class="cj">螺栓</span></div>
<div class="tb" style="left:164px;top:268px;height:24px;line-height:22px">45<span class="cj">号钢</span></div>
<div class="tb" style="left:291px;top:268px;height:24px;line-height:22px">2</div>
<div class="tb" style="left:6px;top:294px;height:24px;line-height:22px"><span class="cj">轴承</span></div>
<div class="tb" style="left:164px;top:294px;height:24px;line-height:22px">0Cr17Ni12Mo2</div>
<div class="tb" style="left:291px;top:294px;height:24px;line-height:22px">1</div>
<div class="tb" style="left:6px;top:320px;height:24px;line-height:22px">kurbelwelle</div>
<div class="tb" style="left:164px;top:320px;height:24px;line-height:22px">45<span class="cj">号钢</span></div>
<div class="tb" style="left:291px;top:320px;height:24px;line-height:22px">1</div>
<div class="tb" style="left:6px;top:346px;height:24px;line-height:22px">kurbel_gehaeuse</div>
<div class="tb" style="left:164px;top:346px;height:24px;line-height:22px"><span class="cj">铸铁</span></div>
<div class="tb" style="left:291px;top:346px;height:24px;line-height:22px">1</div>
</div>
</body></html>
